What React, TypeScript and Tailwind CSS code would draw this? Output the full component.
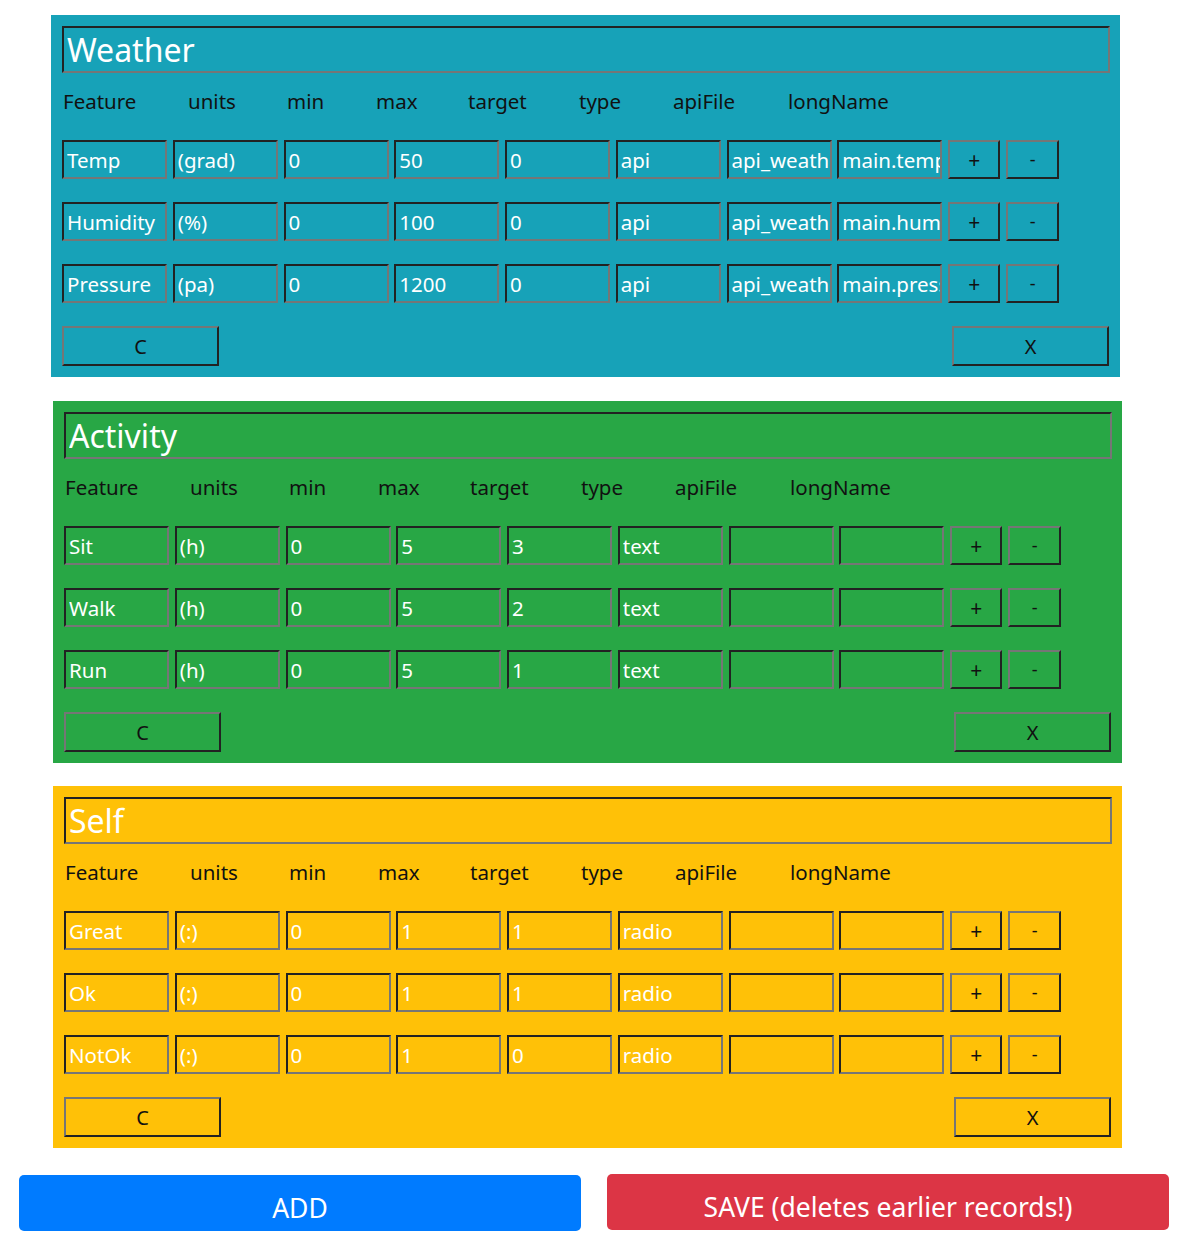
import React from 'react';

type Row = {
  name: string;
  units: string;
  min: string;
  max: string;
  target: string;
  type: string;
  apiFile: string;
  longName: string;
};

type Group = {
  title: string;
  bg: string;
  offset: string;
  rows: Row[];
};

const groups: Group[] = [
  {
    title: 'Weather',
    bg: 'bg-[#17a2b8]',
    offset: 'ml-[51px] mt-[15px]',
    rows: [
      { name: 'Temp', units: '(grad)', min: '0', max: '50', target: '0', type: 'api', apiFile: 'api_weather', longName: 'main.temp' },
      { name: 'Humidity', units: '(%)', min: '0', max: '100', target: '0', type: 'api', apiFile: 'api_weather', longName: 'main.humidity' },
      { name: 'Pressure', units: '(pa)', min: '0', max: '1200', target: '0', type: 'api', apiFile: 'api_weather', longName: 'main.pressure' },
    ],
  },
  {
    title: 'Activity',
    bg: 'bg-[#28a745]',
    offset: 'ml-[53px] mt-[24px]',
    rows: [
      { name: 'Sit', units: '(h)', min: '0', max: '5', target: '3', type: 'text', apiFile: '', longName: '' },
      { name: 'Walk', units: '(h)', min: '0', max: '5', target: '2', type: 'text', apiFile: '', longName: '' },
      { name: 'Run', units: '(h)', min: '0', max: '5', target: '1', type: 'text', apiFile: '', longName: '' },
    ],
  },
  {
    title: 'Self',
    bg: 'bg-[#ffc107]',
    offset: 'ml-[53px] mt-[23px]',
    rows: [
      { name: 'Great', units: '(:)', min: '0', max: '1', target: '1', type: 'radio', apiFile: '', longName: '' },
      { name: 'Ok', units: '(:)', min: '0', max: '1', target: '1', type: 'radio', apiFile: '', longName: '' },
      { name: 'NotOk', units: '(:)', min: '0', max: '1', target: '0', type: 'radio', apiFile: '', longName: '' },
    ],
  },
];

// label columns, widths taken so each label starts where the reference has it
const labels: [string, string][] = [
  ['Feature', 'w-[125px]'],
  ['units', 'w-[99px]'],
  ['min', 'w-[89px]'],
  ['max', 'w-[92px]'],
  ['target', 'w-[111px]'],
  ['type', 'w-[94px]'],
  ['apiFile', 'w-[115px]'],
  ['longName', 'w-[130px]'],
];

const inset =
  'border-2 border-t-[#222] border-l-[#222] border-b-[#767676] border-r-[#767676] bg-transparent outline-none';
const outset =
  'border-2 border-t-[#767676] border-l-[#767676] border-b-[#222] border-r-[#222] bg-transparent text-[#111]';

const Field = ({ value }: { value: string }) => (
  <input
    readOnly
    value={value}
    className={`${inset} w-[105px] h-[39px] pl-[3px] text-[20.5px] text-white`}
  />
);

const Panel = ({ group }: { group: Group }) => (
  <div className={`${group.bg} ${group.offset} w-[1069px] p-[11px] pr-[10px]`}>
    <input
      readOnly
      value={group.title}
      className={`${inset} w-full h-[47px] pl-[3px] text-[32px] text-white`}
    />
    <div className="flex items-center h-[56px] pl-[1px] text-[20.5px] text-[#111]">
      {labels.map(([text, w]) => (
        <span key={text} className={w}>
          {text}
        </span>
      ))}
    </div>
    <div className="flex flex-col gap-[23px] mt-[11px]">
      {group.rows.map((r) => (
        <div key={r.name} className="flex items-center">
          <div className="flex gap-[5.75px]">
            <Field value={r.name} />
            <Field value={r.units} />
            <Field value={r.min} />
            <Field value={r.max} />
            <Field value={r.target} />
            <Field value={r.type} />
            <Field value={r.apiFile} />
            <Field value={r.longName} />
          </div>
          <button className={`${outset} ml-[6px] w-[52px] h-[39px] pt-[2px] text-[21px]`}>+</button>
          <button className={`${outset} ml-[6px] w-[53px] h-[39px] text-[18px]`}>-</button>
        </div>
      ))}
      <div className="flex justify-between pr-[1px]">
        <button className={`${outset} w-[157px] h-[40px] pt-[1px] text-[20px]`}>C</button>
        <button className={`${outset} w-[157px] h-[40px] pt-[1px] text-[20px]`}>X</button>
      </div>
    </div>
  </div>
);

export default function App() {
  return (
    <div className="w-[1178px] min-h-[1250px] bg-white font-['Noto_Sans',sans-serif]">
      {groups.map((g) => (
        <Panel key={g.title} group={g} />
      ))}
      <div className="flex gap-[26px] pl-[19px] mt-[27px]">
        <button className="w-[562px] h-[56px] pt-[12px] rounded-[5px] bg-[#007bff] text-white text-[26.5px]">
          ADD
        </button>
        <button className="w-[562px] h-[56px] pt-[12px] -mt-[1px] rounded-[5px] bg-[#dc3545] text-white text-[26.5px]">
          SAVE (deletes earlier records!)
        </button>
      </div>
    </div>
  );
}
